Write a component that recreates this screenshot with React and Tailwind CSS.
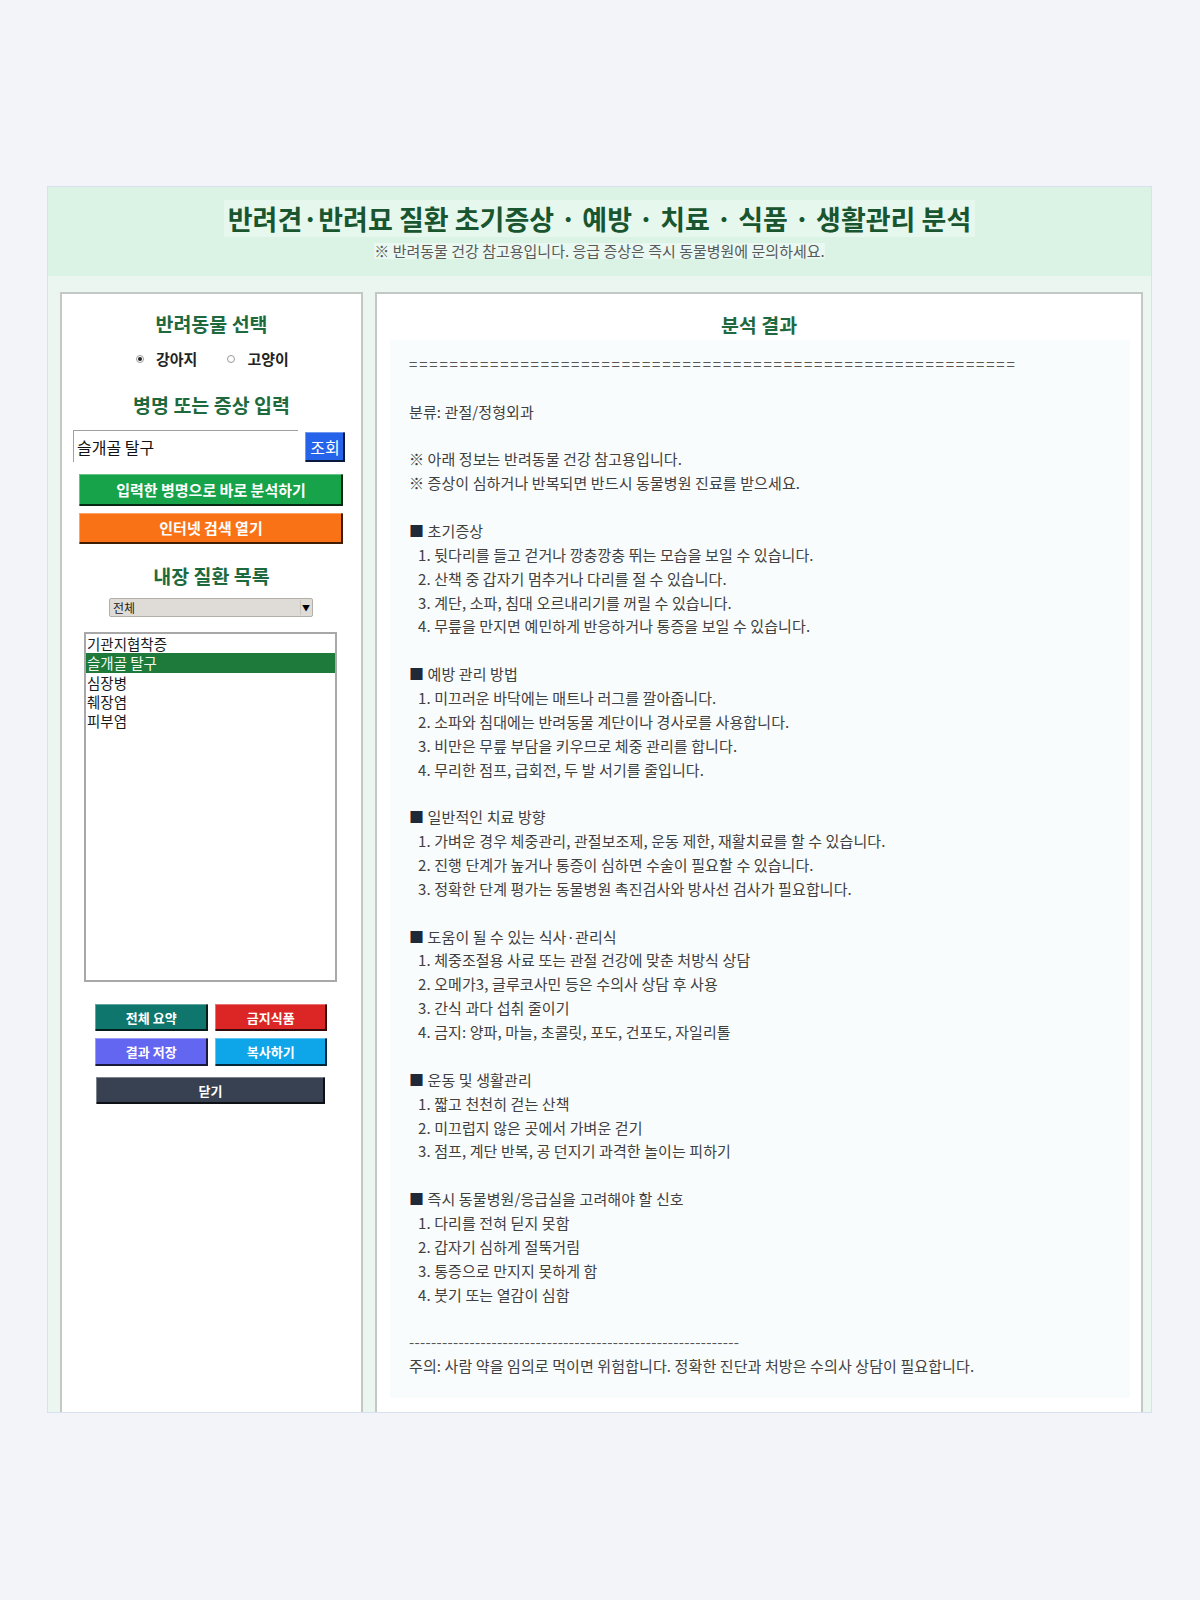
import React from "react";

const FONT = "font-['Noto_Sans_CJK_KR','Noto_Sans',sans-serif]";

const lines = [
  { t: "============================================================", k: "eq" },
  { t: "" },
  { t: "분류: 관절/정형외과" },
  { t: "" },
  { t: "※ 아래 정보는 반려동물 건강 참고용입니다." },
  { t: "※ 증상이 심하거나 반복되면 반드시 동물병원 진료를 받으세요." },
  { t: "" },
  { t: "초기증상", k: "h" },
  { t: "1. 뒷다리를 들고 걷거나 깡충깡충 뛰는 모습을 보일 수 있습니다.", k: "i" },
  { t: "2. 산책 중 갑자기 멈추거나 다리를 절 수 있습니다.", k: "i" },
  { t: "3. 계단, 소파, 침대 오르내리기를 꺼릴 수 있습니다.", k: "i" },
  { t: "4. 무릎을 만지면 예민하게 반응하거나 통증을 보일 수 있습니다.", k: "i" },
  { t: "" },
  { t: "예방 관리 방법", k: "h" },
  { t: "1. 미끄러운 바닥에는 매트나 러그를 깔아줍니다.", k: "i" },
  { t: "2. 소파와 침대에는 반려동물 계단이나 경사로를 사용합니다.", k: "i" },
  { t: "3. 비만은 무릎 부담을 키우므로 체중 관리를 합니다.", k: "i" },
  { t: "4. 무리한 점프, 급회전, 두 발 서기를 줄입니다.", k: "i" },
  { t: "" },
  { t: "일반적인 치료 방향", k: "h" },
  { t: "1. 가벼운 경우 체중관리, 관절보조제, 운동 제한, 재활치료를 할 수 있습니다.", k: "i" },
  { t: "2. 진행 단계가 높거나 통증이 심하면 수술이 필요할 수 있습니다.", k: "i" },
  { t: "3. 정확한 단계 평가는 동물병원 촉진검사와 방사선 검사가 필요합니다.", k: "i" },
  { t: "" },
  { t: "도움이 될 수 있는 식사·관리식", k: "h" },
  { t: "1. 체중조절용 사료 또는 관절 건강에 맞춘 처방식 상담", k: "i" },
  { t: "2. 오메가3, 글루코사민 등은 수의사 상담 후 사용", k: "i" },
  { t: "3. 간식 과다 섭취 줄이기", k: "i" },
  { t: "4. 금지: 양파, 마늘, 초콜릿, 포도, 건포도, 자일리톨", k: "i" },
  { t: "" },
  { t: "운동 및 생활관리", k: "h" },
  { t: "1. 짧고 천천히 걷는 산책", k: "i" },
  { t: "2. 미끄럽지 않은 곳에서 가벼운 걷기", k: "i" },
  { t: "3. 점프, 계단 반복, 공 던지기 과격한 놀이는 피하기", k: "i" },
  { t: "" },
  { t: "즉시 동물병원/응급실을 고려해야 할 신호", k: "h" },
  { t: "1. 다리를 전혀 딛지 못함", k: "i" },
  { t: "2. 갑자기 심하게 절뚝거림", k: "i" },
  { t: "3. 통증으로 만지지 못하게 함", k: "i" },
  { t: "4. 붓기 또는 열감이 심함", k: "i" },
  { t: "" },
  { t: "------------------------------------------------------------", k: "dash" },
  { t: "주의: 사람 약을 임의로 먹이면 위험합니다. 정확한 진단과 처방은 수의사 상담이 필요합니다." },
];

const RAISED =
  "shadow-[inset_1px_1px_0_rgba(255,255,255,0.35),inset_-2px_-2px_0_rgba(0,0,0,0.75)]";

function Radio({ checked, label }) {
  return (
    <label className="flex items-center gap-[12px]">
      <span className="flex h-[8px] w-[8px] items-center justify-center rounded-full border border-[#9a9a9a] bg-white">
        {checked && <span className="h-[4px] w-[4px] rounded-full bg-[#222]" />}
      </span>
      <span className="text-[15px] font-bold leading-[20px] text-[#222]">{label}</span>
    </label>
  );
}

export default function App() {
  return (
    <div className={`min-h-[1600px] bg-[#f3f4f9] pl-[47px] pt-[186px] ${FONT}`}>
      <div className="h-[1227px] w-[1105px] overflow-hidden border border-[#dae0ec] bg-[#eaf6ef]">
        <header className="flex h-[89px] flex-col items-center bg-[#daf3e5] pt-[13px]">
          <h1 className="bg-[#e6f8ee] px-[4px] text-[27px] font-bold leading-[37px] text-[#19552f]">
            반려견·반려묘 질환 초기증상 · 예방 · 치료 · 식품 · 생활관리 분석
          </h1>
          <p className="mt-[6px] bg-[#e9f8f0] text-[15px] leading-[16px] text-[#5a5a5a]">
            ※ 반려동물 건강 참고용입니다. 응급 증상은 즉시 동물병원에 문의하세요.
          </p>
        </header>

        <div className="flex gap-[12px] pl-[12px] pt-[16px]">
          {/* Left panel */}
          <aside className="flex h-[1140px] w-[303px] flex-col border-2 border-[#c4c8c4] bg-white">
            <h2 className="mt-[18px] text-center text-[19.5px] font-bold leading-[24px] text-[#1e6a3e]">
              반려동물 선택
            </h2>
            <div className="ml-[74px] mt-[13px] flex gap-[30px]">
              <Radio checked label="강아지" />
              <Radio label="고양이" />
            </div>
            <h2 className="mt-[24px] text-center text-[19.5px] font-bold leading-[24px] text-[#1e6a3e]">
              병명 또는 증상 입력
            </h2>
            <div className="ml-[11px] mt-[13px] flex items-end gap-[7px]">
              <div className="flex h-[32px] w-[225px] items-center border-l border-t border-[#a0a0a0] bg-white pl-[3px] text-[16px] text-[#111]">
                슬개골 탈구
              </div>
              <button className={`h-[30px] w-[40px] bg-[#2563eb] text-[16px] text-white ${RAISED}`}>
                조회
              </button>
            </div>
            <button
              className={`ml-[17px] mt-[12px] h-[32px] w-[264px] bg-[#16a34a] text-[15px] font-bold text-white ${RAISED}`}
            >
              입력한 병명으로 바로 분석하기
            </button>
            <button
              className={`ml-[17px] mt-[7px] h-[31px] w-[264px] bg-[#f97316] text-[15px] font-bold text-white ${RAISED}`}
            >
              인터넷 검색 열기
            </button>
            <h2 className="mt-[20px] text-center text-[19.5px] font-bold leading-[24px] text-[#1e6a3e]">
              내장 질환 목록
            </h2>
            <div className="ml-[47px] mt-[10px] flex h-[19px] w-[204px] items-center justify-between rounded-[2px] border border-[#b3afa9] bg-[#dfdcd7] pl-[3px] pr-[1px]">
              <span className="text-[12px] leading-[14px] text-[#222]">전체</span>
              <span className="flex h-[15px] w-[11px] items-center justify-center border-l border-[#c9c5bf] text-[8px] text-black">
                ▼
              </span>
            </div>
            <div className="ml-[22px] mt-[15px] h-[350px] w-[253px] border-2 border-[#a8a8a8] bg-white">
              {["기관지협착증", "슬개골 탈구", "심장병", "췌장염", "피부염"].map((d, i) => (
                <div
                  key={d}
                  className={`h-[19.3px] pl-[1px] text-[14.5px] leading-[19.3px] ${
                    i === 1 ? "bg-[#1e7a3a] text-[#eef8ef]" : "text-[#1a1a1a]"
                  }`}
                >
                  {d}
                </div>
              ))}
            </div>
            <div className="ml-[33px] mt-[22px] grid w-[232px] grid-cols-2 gap-x-[7px] gap-y-[7px]">
              <button className={`h-[27px] bg-[#0f766e] text-[13px] font-bold text-white ${RAISED}`}>전체 요약</button>
              <button className={`h-[27px] bg-[#dc2626] text-[13px] font-bold text-white ${RAISED}`}>금지식품</button>
              <button className={`h-[28px] bg-[#6366f1] text-[13px] font-bold text-white ${RAISED}`}>결과 저장</button>
              <button className={`h-[28px] bg-[#0ea5e9] text-[13px] font-bold text-white ${RAISED}`}>복사하기</button>
            </div>
            <button
              className={`ml-[34px] mt-[11px] h-[27px] w-[229px] bg-[#374151] text-[13px] font-bold text-white ${RAISED}`}
            >
              닫기
            </button>
          </aside>

          {/* Right panel */}
          <main className="flex h-[1140px] w-[768px] flex-col border-2 border-[#c4c8c4] bg-white">
            <h2 className="mt-[19px] text-center text-[19.5px] font-bold leading-[24px] text-[#1e6a3e]">
              분석 결과
            </h2>
            <div className="ml-[13px] mt-[3px] h-[1058px] w-[740px] bg-[#f9fcfc] pl-[19px] pt-[12px] text-[15px] leading-[23.86px] tracking-[0.1px] text-[#404040]">
              {lines.map((l, i) => {
                if (l.k === "h")
                  return (
                    <div key={i} className="h-[23.86px] whitespace-pre">
                      <span className="text-[#1f2937]">■</span> {l.t}
                    </div>
                  );
                if (l.k === "i")
                  return (
                    <div key={i} className="h-[23.86px] whitespace-pre pl-[9px]">
                      {l.t}
                    </div>
                  );
                if (l.k === "eq")
                  return (
                    <div key={i} className="h-[23.86px] whitespace-pre tracking-[1.8px] text-[#555]">
                      {l.t}
                    </div>
                  );
                if (l.k === "dash")
                  return (
                    <div key={i} className="h-[23.86px] whitespace-pre tracking-[0.3px] text-[#555]">
                      {l.t}
                    </div>
                  );
                return (
                  <div key={i} className="h-[23.86px] whitespace-pre">
                    {l.t}
                  </div>
                );
              })}
            </div>
          </main>
        </div>
      </div>
    </div>
  );
}
